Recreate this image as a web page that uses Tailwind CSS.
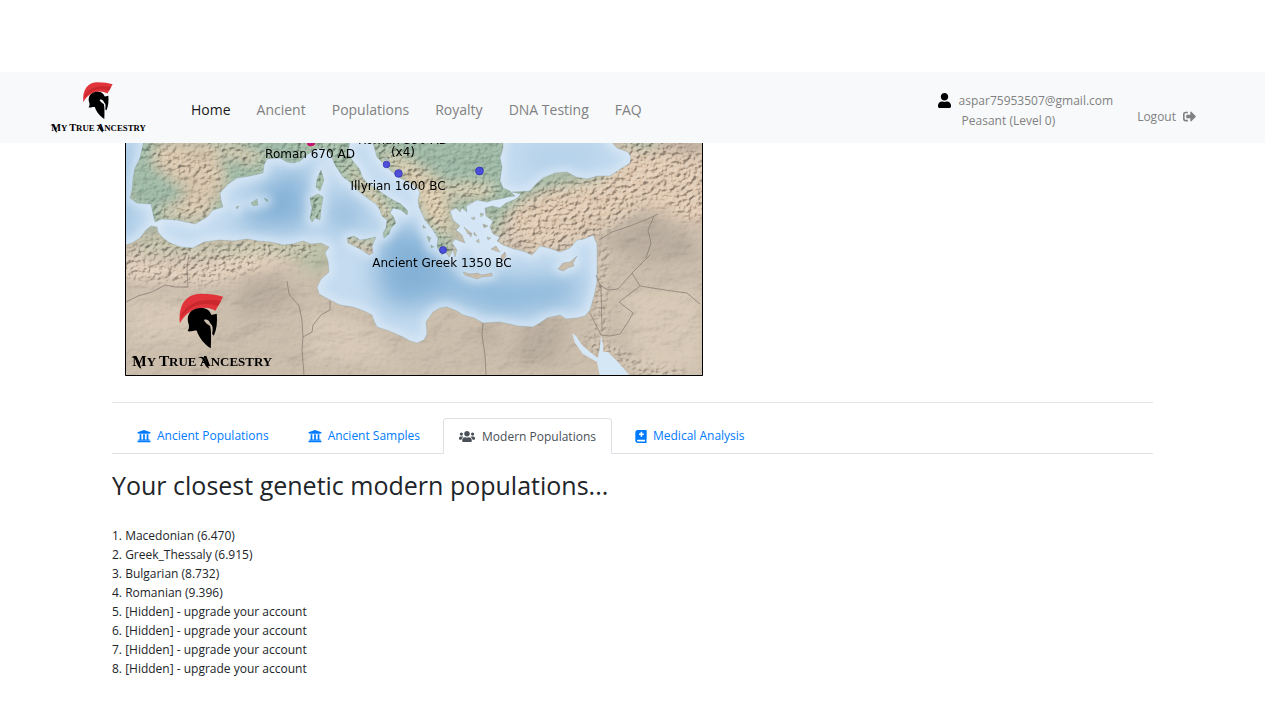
<!DOCTYPE html>
<html lang="en">
<head>
  <meta charset="UTF-8">
  <meta name="viewport" content="width=device-width, initial-scale=1.0">
  <title>My True Ancestry</title>
  <script src="https://cdn.jsdelivr.net/npm/@tailwindcss/browser@4"></script>
</head>
<body class="bg-white font-['Open_Sans','Noto_Sans',sans-serif] text-xs text-[#212529]">

  <!-- Shared shapes -->
  <svg class="hidden" aria-hidden="true">
    <symbol id="logo" viewBox="30 112 430 240">
      <path fill="#e0343a" d="M180 206C174 150 200 117 243 117C270 117 292 120 310 126L287 168C258 150 206 156 180 206Z"/>
      <path fill="#c9282e" d="M186 178C208 138 255 130 303 139L295 154C255 140 212 148 183 190Z"/>
      <path fill="#000" d="M203 229C208 222 209 214 205 204C199 180 214 162 240 160C258 158 269 166 275 181L291 177C293 202 291 224 282 243L277 238C280 222 279 212 272 207C267 195 260 193 252 196C256 204 263 210 271 214C275 230 274 255 273 281C256 270 238 252 231 228C220 225 214 233 203 229Z"/>
      <g fill="#000" font-family="Liberation Serif, serif" font-weight="bold">
        <text x="37" y="333" font-size="39"><tspan font-size="46">M</tspan>Y <tspan font-size="46">T</tspan>RUE <tspan font-size="46">A</tspan>NCESTRY</text>
        <path d="M33 309C43 302 52 306 55 316L64 342C55 340 50 326 47 316C44 309 39 309 33 309ZM234 309C246 303 254 308 258 318L268 342C259 340 253 326 250 318C247 311 241 309 234 309Z"/>
      </g>
    </symbol>
    <symbol id="university" viewBox="0 0 512 512">
      <path d="M496 128v16a8 8 0 0 1-8 8h-24v12c0 6.627-5.373 12-12 12H60c-6.627 0-12-5.373-12-12v-12H24a8 8 0 0 1-8-8v-16a8 8 0 0 1 4.941-7.392l232-88a7.996 7.996 0 0 1 6.118 0l232 88A8 8 0 0 1 496 128zm-24 304H40c-13.255 0-24 10.745-24 24v16a8 8 0 0 0 8 8h464a8 8 0 0 0 8-8v-16c0-13.255-10.745-24-24-24zM96 192v192H60c-6.627 0-12 5.373-12 12v20h416v-20c0-6.627-5.373-12-12-12h-36V192h-64v192h-64V192h-64v192h-64V192H96z"/>
    </symbol>
  </svg>

  <div class="mr-[15px] pt-18">

    <!-- Navbar -->
    <header class="flex h-[71px] items-center bg-[#f8f9fa] pr-[69px] pl-[49px]">
      <a href="#" aria-label="My True Ancestry"><svg class="h-[54px] w-[98px]"><use href="#logo"/></svg></a>
      <nav class="ml-11 flex flex-1 gap-[26px] pt-1 text-sm text-[#808182]">
        <a href="#" class="text-[#19191a]">Home</a>
        <a href="#">Ancient</a>
        <a href="#">Populations</a>
        <a href="#">Royalty</a>
        <a href="#">DNA Testing</a>
        <a href="#">FAQ</a>
      </nav>
      <div class="pt-[6px] text-[#808182]">
        <div class="flex items-center gap-2 leading-5">
          <svg class="h-[15px] w-[13px]" viewBox="0 0 448 512" fill="#000"><path d="M224 256c70.7 0 128-57.3 128-128S294.7 0 224 0 96 57.3 96 128s57.3 128 128 128zm89.6 32h-16.7c-22.2 10.2-46.9 16-72.9 16s-50.6-5.8-72.9-16h-16.7C60.2 288 0 348.2 0 422.4V464c0 26.5 21.5 48 48 48h352c26.5 0 48-21.5 48-48v-41.6c0-74.2-60.2-134.4-134.4-134.4z"/></svg>
          <span>aspar75953507@gmail.com</span>
        </div>
        <div class="pl-6 leading-5">Peasant (Level 0)</div>
      </div>
      <a href="#" class="ml-6 flex items-center gap-[7px] pt-[18px] text-[#808182]">Logout
        <svg class="size-[13px]" viewBox="0 0 512 512" fill="currentColor"><path d="M497 273L329 441c-15 15-41 4.5-41-17v-96H152c-13.3 0-24-10.7-24-24v-96c0-13.3 10.7-24 24-24h136V88c0-21.4 25.9-32 41-17l168 168c9.3 9.4 9.3 24.6 0 34zM192 436v-40c0-6.6-5.4-12-12-12H96c-17.7 0-32-14.3-32-32V160c0-17.7 14.3-32 32-32h84c6.6 0 12-5.4 12-12V76c0-6.6-5.4-12-12-12H96c-53 0-96 43-96 96v192c0 53 43 96 96 96h84c6.6 0 12-5.4 12-12z"/></svg>
      </a>
    </header>

    <main class="mx-auto max-w-[1041px]">

      <!-- Map -->
      <div class="pl-[13px]">
        <svg class="block w-full max-w-[578px]" viewBox="125 143 578 233" role="img" aria-label="Map of ancient samples">
          <defs>
            <path id="coast" d="M144 140L140 158L135 168L133 178L132 190L130 198L137 203L151 204L153 214L155 222L162 219L177 220L186 222L195 224L207 217L213 210L223 207L221 200L220 193L228 184L237 178L250 176L263 173L264 165L267 159L280 158L287 162L293 163L300 161L307 155L315 149L324 148L330 153L335 165L343 177L350 182L357 190L370 200L376 204L380 210L382 216L387 220L386 228L383 233L384 238L389 234L391 228L396 223L393 216L390 213L393 208L401 210L407 215L408 211L401 204L393 200L385 195L378 190L367 183L362 177L360 170L352 160L348 153L350 140L372 140L377 157L384 164L390 170L400 178L410 183L417 188L420 192L418 200L419 207L425 220L433 230L438 238L437 247L442 255L445 251L449 257L453 250L455 257L457 250L452 243L455 239L465 243L462 235L456 230L460 226L453 220L450 211L456 208L460 212L462 208L467 212L466 206L470 204L477 200L487 202L493 200L500 199L508 197L515 196L510 191L503 188L500 180L502 167L500 158L503 148L503 140Z
              M610 140L704 140L704 378L125 378L125 245L132 243L140 238L146 230L151 226L157 227L158 232L163 238L170 243L181 247L193 248L204 242L220 240L233 241L247 239L258 241L270 242L284 245L293 244L303 241L311 244L321 243L329 247L325 253L328 261L329 272L321 279L317 287L319 294L330 300L340 305L353 307L364 311L372 315L374 321L377 327L389 331L403 337L410 341L417 343L424 340L427 334L426 322L433 312L440 308L447 307L457 311L463 315L474 318L483 323L500 322L518 326L533 327L540 323L547 318L560 315L566 319L577 318L585 316L590 310L594 296L597 282L597 268L597 253L597 244L593 235L584 239L577 240L570 248L560 252L549 248L540 246L532 255L523 251L514 249L503 245L497 241L500 237L493 234L490 227L493 221L486 216L485 208L492 206L500 208L506 203L516 199L521 194L512 192L530 191L536 184L543 178L555 173L567 172L576 177L587 179L598 176L610 176L622 168L630 163L631 157L628 152L617 148Z
              M317 179L321 170L324 180L320 191L316 187ZM310 198L318 194L323 197L321 210L320 220L315 218L312 222L310 218L312 208ZM347 238L354 236L360 240L367 239L376 237L372 246L373 253L369 255L362 250L348 243ZM251 203L257 199L258 205L253 206ZM264 198L268 200L267 202ZM236 207L239 206L237 209ZM558 269L563 263L570 262L577 256L573 263L574 266L568 268L563 271ZM463 272L470 274L477 273L482 275L492 273L492 276L482 277L477 279L465 275Z
              M471 218L475 217L474 220ZM480 213L484 214L481 217ZM483 224L488 226L484 228ZM469 234L472 233L471 237ZM476 241L479 239L479 243ZM487 237L491 238L488 240ZM464 227L471 233L468 234ZM474 232L477 236L474 235ZM491 249L496 246L500 252L496 251ZM501 256L505 252L506 256L502 261ZM427 236L431 238L429 242ZM423 225L426 228L423 228ZM431 245L434 247L431 248ZM387 158L390 161L384 158Z"/>
            <clipPath id="land"><use href="#coast"/></clipPath>
            <clipPath id="frame"><rect x="125" y="143" width="578" height="233"/></clipPath>
            <filter id="soft" x="-50%" y="-50%" width="200%" height="200%"><feGaussianBlur stdDeviation="13"/></filter>
            <filter id="patch" x="-50%" y="-50%" width="200%" height="200%"><feGaussianBlur stdDeviation="7"/></filter>
            <filter id="shelf" x="-10%" y="-10%" width="120%" height="120%"><feGaussianBlur stdDeviation="5"/></filter>
            <!-- shaded relief, rough for mountains and smooth for plains -->
            <filter id="ridges" x="0" y="0" width="100%" height="100%" color-interpolation-filters="sRGB">
              <feTurbulence type="fractalNoise" baseFrequency="0.2 0.24" numOctaves="3" seed="8" result="n"/>
              <feColorMatrix in="n" type="matrix" values="0 0 0 0 0 0 0 0 0 0 0 0 0 0 0 1 0 0 0 0" result="h"/>
              <feDiffuseLighting in="h" surfaceScale="4" diffuseConstant="0.9" lighting-color="#fff2e4" result="lit"><feDistantLight azimuth="225" elevation="48"/></feDiffuseLighting>
              <feComposite in="lit" in2="SourceAlpha" operator="in"/>
            </filter>
            <filter id="plains" x="0" y="0" width="100%" height="100%" color-interpolation-filters="sRGB">
              <feTurbulence type="fractalNoise" baseFrequency="0.03 0.05" numOctaves="4" seed="3" result="n"/>
              <feColorMatrix in="n" type="matrix" values="0 0 0 0 0 0 0 0 0 0 0 0 0 0 0 1 0 0 0 0" result="h"/>
              <feDiffuseLighting in="h" surfaceScale="3" diffuseConstant="1.2" lighting-color="#ffffff" result="lit"><feDistantLight azimuth="225" elevation="56"/></feDiffuseLighting>
              <feComposite in="lit" in2="SourceAlpha" operator="in"/>
            </filter>
            <mask id="high" maskUnits="userSpaceOnUse" x="125" y="140" width="580" height="240">
              <rect x="125" y="140" width="580" height="240" fill="#111"/>
              <rect x="125" y="130" width="430" height="95" fill="#666" filter="url(#shelf)"/>
              <g fill="none" stroke="#fff" stroke-linecap="round" stroke-linejoin="round" filter="url(#shelf)">
                <path stroke-width="18" d="M150 150L180 165L218 175M160 213L205 208M215 145L262 162M300 145L335 148L355 175L385 205L387 225M375 145L405 165L435 190L435 225L447 250M455 190L490 190M130 262L150 245L200 256L250 248L310 250M130 270L200 275L250 262M350 240L372 243M317 175L316 215"/>
                <path stroke-width="40" d="M510 230L545 205L590 195L640 170L690 200M540 240L580 225L630 190M640 150L690 170"/>
                <path stroke-width="9" d="M602 250L600 330M590 340L600 350M608 348L640 368L680 376"/>
              </g>
            </mask>
          </defs>
          <g clip-path="url(#frame)">
            <!-- sea -->
            <rect x="125" y="143" width="578" height="233" fill="#c5dcf0"/>
            <g filter="url(#soft)" fill="#84b1d6">
              <path d="M262 185L306 165L308 228L235 228Z"/>
              <path d="M328 192L368 207L355 232L328 228Z" opacity=".8"/>
              <path d="M382 228L425 230L455 275L435 302L395 310L375 285Z"/>
              <path d="M440 272L520 280L585 275L570 305L500 315L445 298Z" opacity=".9"/>
              <path d="M515 150L605 146L600 162L535 172Z" opacity=".35"/>
              <path d="M115 143L130 143L128 240L115 240Z"/>
            </g>
            <use href="#coast" fill="none" stroke="#e4effa" stroke-width="8" opacity=".7" filter="url(#shelf)"/>
            <path d="M462 215L482 205L488 235L500 258L478 262L465 240Z" fill="#d4e5f5" filter="url(#shelf)"/>
            <!-- land -->
            <g clip-path="url(#land)">
              <rect x="125" y="140" width="580" height="240" fill="#ccbead"/>
              <g filter="url(#patch)">
                <path fill="#9cb9a6" d="M120 130H510L520 200L460 220L450 262L380 245L330 235L230 225L130 230Z"/>
                <path fill="#9cb7a2" d="M500 188L540 172L640 165L640 148L610 135L660 135L650 165L590 185L530 195L505 215L490 245L485 210Z"/>
                <path fill="#d6c4ac" d="M158 140L218 142L226 185L212 208L180 205L185 190L152 165ZM225 143L262 155L255 165L225 155ZM165 206L220 195L205 220L160 216Z"/>
                <path fill="#d8c9ae" d="M342 160L370 185L392 215L383 225L365 200ZM375 150L412 162L448 185L454 240L425 220L405 180ZM450 183L495 186L490 197L455 198Z"/>
                <path fill="#dec7b1" d="M505 215L545 190L600 180L635 150L710 150L710 230L640 207L590 232L530 250Z"/>
                <path fill="#b9c0a6" d="M140 235L200 245L330 240L330 275L240 255L135 250Z"/>
                <path fill="#e0ceba" d="M125 262L200 265L260 252L310 262L230 280L125 280Z"/>
                <path fill="#b4a89b" d="M598 240L650 212L690 235L700 260L640 262ZM240 285L270 270L300 300L240 320ZM525 320L570 322L555 365L510 360ZM480 330L500 330L500 345L480 345Z" opacity=".7"/>
                <path fill="#a9988a" d="M640 140L700 140L700 160L665 152Z" opacity=".6"/>
                <path fill="#d8cab7" d="M620 290L700 290V370H640ZM310 310L360 320L400 365L310 360ZM130 300L210 300L200 340L130 345Z"/>
              </g>
              <rect x="125" y="140" width="580" height="240" filter="url(#plains)" opacity=".25" class="mix-blend-multiply"/>
              <g mask="url(#high)" class="mix-blend-hard-light" opacity=".36"><rect x="125" y="140" width="580" height="240" filter="url(#ridges)"/></g>
            </g>
            <use href="#coast" fill="none" stroke="#7e9390" stroke-width=".6" opacity=".5"/>
            <path fill="#d5e6f5" d="M572 333L576 336L582 345L590 352L598 358L600 346L601 335L603 345L603 352L608 352L618 362L631 377L600 377L597 362L583 354L575 343Z"/>
            <!-- borders -->
            <path fill="none" stroke="#85796f" stroke-width=".9" opacity=".8" d="M189 255L187 268L188 287L175 287L165 285L152 292L138 296L126 302M287 281L289 294L299 306L302 320L303 337L302 350L304 375M303 337L312 332L313 325L321 315L330 310L330 301M483 323L482 335L485 355L486 375M590 313L601 335L610 336L620 334L628 322L633 313L619 302L640 286L632 273L650 255M632 273L618 289L608 290L600 285M640 286L665 290L687 293L700 304M596 275L601 288L602 330M599 240L612 232L630 226L650 218L658 214M646 258L651 243L648 230L654 216"/>
            <g fill="#3c3ce0" fill-opacity=".85" stroke="#2828b4" stroke-width=".7">
              <circle cx="386.500" cy="164.500" r="3.300"/><circle cx="398.500" cy="173.500" r="3.800"/><circle cx="479.500" cy="171" r="3.900"/><circle cx="443" cy="250" r="3.500"/>
              <circle cx="311" cy="142" r="4" fill="#c00080" stroke="#e00030"/>
            </g>
            <g font-family="DejaVu Sans, sans-serif" font-size="12" fill="#000" text-anchor="middle">
              <text x="310" y="158">Roman 670 AD</text>
              <text x="403" y="144">Roman 590 AD</text>
              <text x="403" y="156">(x4)</text>
              <text x="398" y="190">Illyrian 1600 BC</text>
              <text x="442" y="267">Ancient Greek 1350 BC</text>
            </g>
            <use href="#logo" x="130" y="292" width="143" height="80"/>
          </g>
          <path fill="none" stroke="#000" d="M125.500 143V375.500H702.500V143"/>
        </svg>
      </div>

      <hr class="mt-[26px] mb-[15px] border-[#e3e5e7]">

      <!-- Tabs -->
      <div class="flex h-9 gap-[7px] border-b border-[#dee2e6] pl-[9px]" role="tablist">
        <button type="button" role="tab" class="flex h-9 items-center gap-[6px] px-4 text-[#007bff]"><svg class="size-[14px]" fill="currentColor"><use href="#university"/></svg>Ancient Populations</button>
        <button type="button" role="tab" class="flex h-9 items-center gap-[6px] px-4 text-[#007bff]"><svg class="size-[14px]" fill="currentColor"><use href="#university"/></svg>Ancient Samples</button>
        <button type="button" role="tab" aria-selected="true" class="flex h-9 items-center gap-[7px] rounded-t border border-b-0 border-[#dee2e6] bg-white px-[15px] text-[#495057]"><svg class="h-[13px] w-4" viewBox="0 0 640 512" fill="currentColor"><path d="M96 224c35.3 0 64-28.7 64-64s-28.7-64-64-64-64 28.7-64 64 28.7 64 64 64zm448 0c35.3 0 64-28.7 64-64s-28.7-64-64-64-64 28.7-64 64 28.7 64 64 64zm32 32h-64c-17.6 0-33.5 7.1-45.1 18.6 40.3 22.1 68.9 62 75.1 109.4h66c17.7 0 32-14.3 32-32v-32c0-35.3-28.7-64-64-64zm-256 0c61.9 0 112-50.1 112-112S381.9 32 320 32 208 82.1 208 144s50.1 112 112 112zm76.8 32h-8.3c-20.8 10-43.9 16-68.5 16s-47.6-6-68.5-16h-8.3C179.6 288 128 339.6 128 403.2V432c0 26.5 21.5 48 48 48h288c26.5 0 48-21.5 48-48v-28.8c0-63.6-51.6-115.2-115.2-115.2zm-223.7-13.4C161.5 263.1 145.6 256 128 256H64c-35.3 0-64 28.7-64 64v32c0 17.7 14.3 32 32 32h65.9c6.3-47.4 34.9-87.3 75.2-109.4z"/></svg>Modern Populations</button>
        <button type="button" role="tab" class="flex h-9 items-center gap-[6px] px-4 text-[#007bff]"><svg class="h-[13px] w-3" viewBox="0 0 448 512" fill="currentColor"><path d="M448 358.4V25.6c0-16-9.6-25.6-25.6-25.6H96C41.6 0 0 41.6 0 96v320c0 54.4 41.6 96 96 96h326.4c12.8 0 25.6-9.6 25.6-25.6v-16q0-9.6-9.6-19.2c-3.2-16-3.2-60.8 0-73.6q9.6-4.8 9.6-19.2zM144 144a8 8 0 0 1 8-8h56V80a8 8 0 0 1 8-8h48a8 8 0 0 1 8 8v56h56a8 8 0 0 1 8 8v48a8 8 0 0 1-8 8h-56v56a8 8 0 0 1-8 8h-48a8 8 0 0 1-8-8v-56h-56a8 8 0 0 1-8-8zm236.8 304H96c-19.2 0-32-12.8-32-32s16-32 32-32h284.8z"/></svg>Medical Analysis</button>
      </div>

      <h1 class="mt-[15px] text-[25px] leading-8">Your closest genetic modern populations...</h1>

      <ol class="mt-[25px] leading-[19px]">
        <li>1. Macedonian (6.470)</li>
        <li>2. Greek_Thessaly (6.915)</li>
        <li>3. Bulgarian (8.732)</li>
        <li>4. Romanian (9.396)</li>
        <li>5. [Hidden] - upgrade your account</li>
        <li>6. [Hidden] - upgrade your account</li>
        <li>7. [Hidden] - upgrade your account</li>
        <li>8. [Hidden] - upgrade your account</li>
      </ol>
    </main>
  </div>
</body>
</html>
